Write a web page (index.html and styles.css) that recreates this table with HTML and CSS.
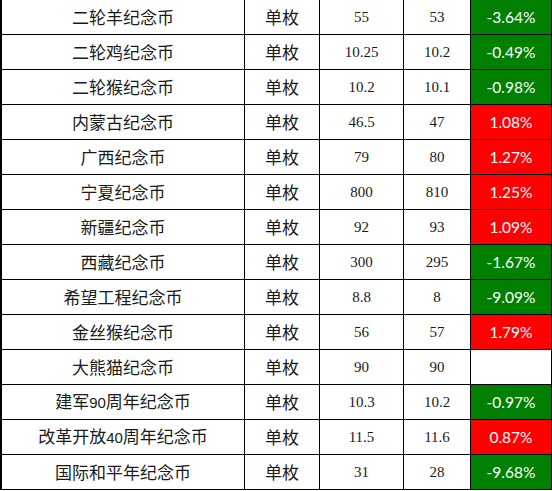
FILE: index.html
```html
<!DOCTYPE html>
<html lang="zh">
<head>
<meta charset="utf-8">
<title>纪念币价格</title>
<link rel="stylesheet" href="styles.css">
</head>
<body>
<table class="coins">
  <colgroup>
    <col class="c-name"><col class="c-unit"><col class="c-p1"><col class="c-p2"><col class="c-chg">
  </colgroup>
  <tbody>
    <tr><td class="name">二轮羊纪念币</td><td class="unit">单枚</td><td class="num">55</td><td class="num">53</td><td class="chg down">-3.64%</td></tr>
    <tr><td class="name">二轮鸡纪念币</td><td class="unit">单枚</td><td class="num">10.25</td><td class="num">10.2</td><td class="chg down">-0.49%</td></tr>
    <tr><td class="name">二轮猴纪念币</td><td class="unit">单枚</td><td class="num">10.2</td><td class="num">10.1</td><td class="chg down">-0.98%</td></tr>
    <tr><td class="name">内蒙古纪念币</td><td class="unit">单枚</td><td class="num">46.5</td><td class="num">47</td><td class="chg up">1.08%</td></tr>
    <tr><td class="name">广西纪念币</td><td class="unit">单枚</td><td class="num">79</td><td class="num">80</td><td class="chg up">1.27%</td></tr>
    <tr><td class="name">宁夏纪念币</td><td class="unit">单枚</td><td class="num">800</td><td class="num">810</td><td class="chg up">1.25%</td></tr>
    <tr><td class="name">新疆纪念币</td><td class="unit">单枚</td><td class="num">92</td><td class="num">93</td><td class="chg up">1.09%</td></tr>
    <tr><td class="name">西藏纪念币</td><td class="unit">单枚</td><td class="num">300</td><td class="num">295</td><td class="chg down">-1.67%</td></tr>
    <tr><td class="name">希望工程纪念币</td><td class="unit">单枚</td><td class="num">8.8</td><td class="num">8</td><td class="chg down">-9.09%</td></tr>
    <tr><td class="name">金丝猴纪念币</td><td class="unit">单枚</td><td class="num">56</td><td class="num">57</td><td class="chg up">1.79%</td></tr>
    <tr><td class="name">大熊猫纪念币</td><td class="unit">单枚</td><td class="num">90</td><td class="num">90</td><td class="chg"></td></tr>
    <tr><td class="name">建军<span class="lat">90</span>周年纪念币</td><td class="unit">单枚</td><td class="num">10.3</td><td class="num">10.2</td><td class="chg down">-0.97%</td></tr>
    <tr><td class="name">改革开放<span class="lat">40</span>周年纪念币</td><td class="unit">单枚</td><td class="num">11.5</td><td class="num">11.6</td><td class="chg up">0.87%</td></tr>
    <tr><td class="name">国际和平年纪念币</td><td class="unit">单枚</td><td class="num">31</td><td class="num">28</td><td class="chg down">-9.68%</td></tr>
  </tbody>
</table>
</body>
</html>
```

FILE: styles.css
```css
html, body {
  margin: 0;
  padding: 0;
  background: #ffffff;
}

.coins {
  border-collapse: separate;
  border-spacing: 0;
  table-layout: fixed;
  width: 552px;
  font-family: "Noto Sans CJK SC", sans-serif;
  color: #1a1a1a;
}

.c-name { width: 245px; }
.c-unit { width: 75px; }
.c-p1 { width: 84px; }
.c-p2 { width: 67px; }
.c-chg { width: 81px; }

.coins td {
  height: 35px;
  padding: 0;
  box-sizing: border-box;
  border-right: 1px solid #000;
  border-bottom: 1px solid #000;
  text-align: center;
  vertical-align: middle;
  white-space: nowrap;
  line-height: 20px;
}

.coins td.name {
  border-left: 2px solid #000;
  font-size: 17px;
}

.coins td.unit {
  font-size: 17px;
}

.lat {
  font-family: "Liberation Sans", sans-serif;
  font-size: 15px;
}

.coins td.num {
  font-family: "Liberation Serif", serif;
  font-size: 15px;
}

.coins td.chg {
  font-family: "Lato", "Liberation Sans", sans-serif;
  font-size: 15.5px;
  color: #ffffff;
}

.coins td.down { background: #008000; }
.coins td.up { background: #ff0000; }
```
